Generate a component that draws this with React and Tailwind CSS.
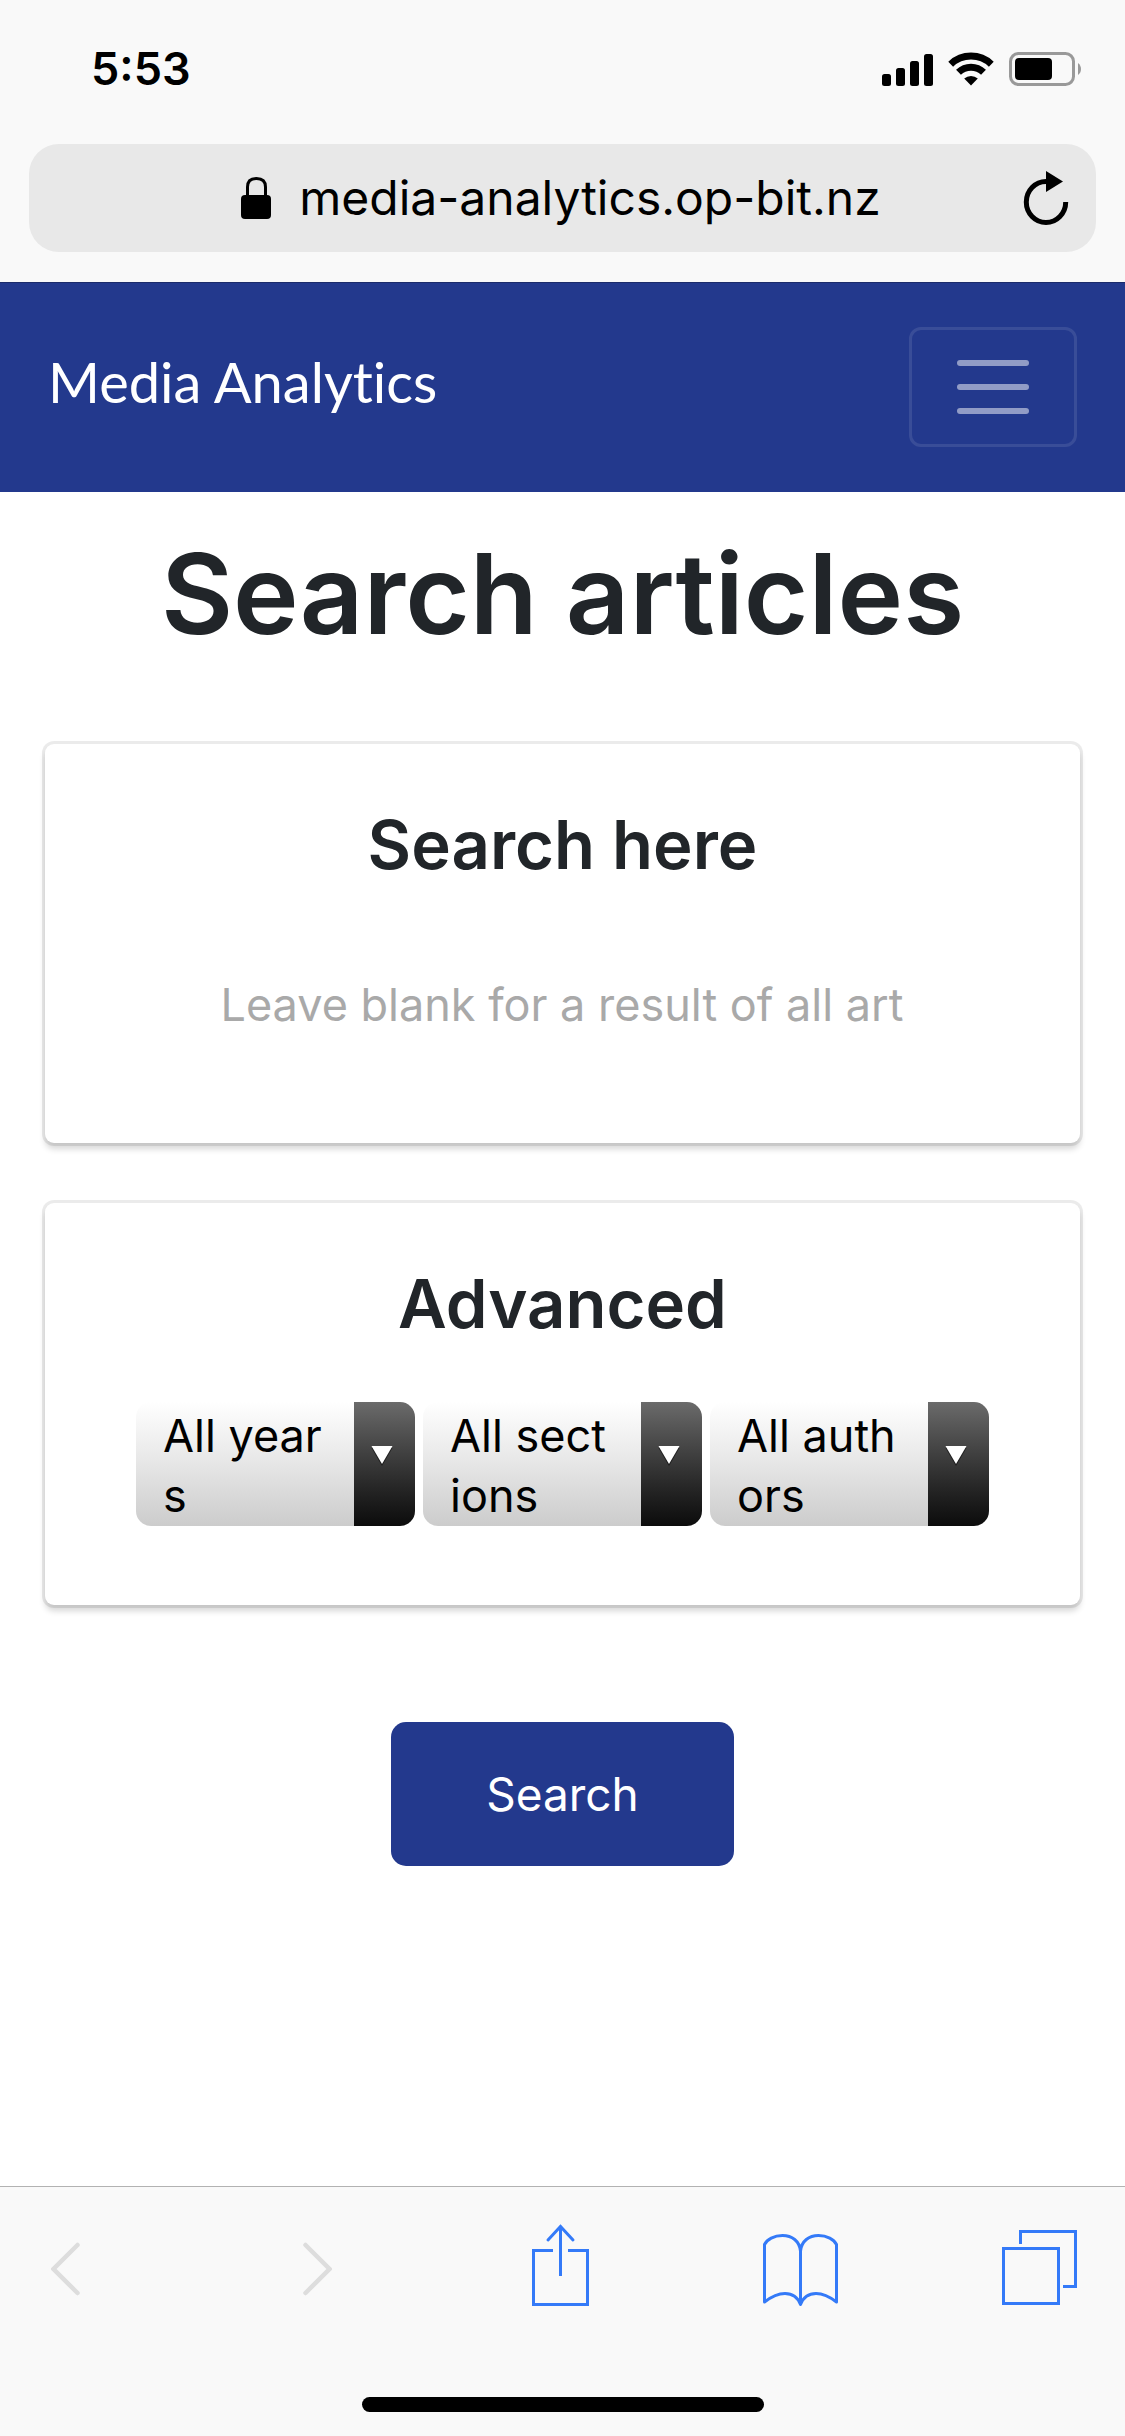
import React from "react";

function StatusBar() {
  return (
    <div className="flex h-[144px] items-start justify-between pt-[42px] pr-[43px] pl-[91px]">
      <time className="text-[45px] leading-[54px] font-semibold">5:53</time>
      <div className="flex items-center gap-[15px] pt-[10px]">
        <svg width="51" height="33" viewBox="0 0 51 33" fill="black" role="img" aria-label="Signal strength">
          <rect x="0" y="21" width="9" height="12" rx="2.5" />
          <rect x="14" y="15" width="9" height="18" rx="2.5" />
          <rect x="28" y="8" width="9" height="25" rx="2.5" />
          <rect x="42" y="1" width="9" height="32" rx="2.5" />
        </svg>
        <svg width="46" height="34" viewBox="0 0 46 34" role="img" aria-label="Wi-Fi">
          <g fill="none" stroke="black" strokeWidth="7">
            <path d="M2.7 12.2 A29.5 29.5 0 0 1 43.3 12.2" />
            <path d="M10.5 20.3 A18 18 0 0 1 35.5 20.3" />
          </g>
          <path d="M23 33.5 L16.2 26.4 A10.5 10.5 0 0 1 29.8 26.4 Z" />
        </svg>
        <svg width="73" height="34" viewBox="0 0 73 34" role="img" aria-label="Battery">
          <rect x="1.5" y="1.5" width="63" height="31" rx="8" fill="none" stroke="#999999" strokeWidth="3" />
          <rect x="6" y="6" width="37" height="22" rx="4" />
          <path d="M69 11 A7.5 7.5 0 0 1 69 23 Z" fill="#999999" />
        </svg>
      </div>
    </div>
  );
}

function AddressBar() {
  return (
    <div className="px-[29px] pb-[30px]">
      <div className="flex h-[108px] items-center rounded-[30px] bg-[#e8e8e8] pr-[27px] pl-[70px]">
        <div className="flex flex-1 items-center justify-center gap-[28px]">
          <svg width="30" height="42" viewBox="0 0 30 42" role="img" aria-label="Secure">
            <path d="M6.5 19 V10 Q6.5 1.5 15.5 1.5 Q24.5 1.5 24.5 10 V19" fill="none" stroke="black" strokeWidth="3" />
            <rect x="0" y="18" width="30" height="24" rx="4" />
          </svg>
          <span className="text-[48px] leading-[60px]">media-analytics.op-bit.nz</span>
        </div>
        <button type="button" aria-label="Reload">
          <svg width="46" height="54" viewBox="0 0 46 54">
            <path d="M23 10.5 A19.7 20.5 0 1 0 42.7 31" fill="none" stroke="black" strokeWidth="5" />
            <path d="M23 0 L40 10.5 L23 21 Z" />
          </svg>
        </button>
      </div>
    </div>
  );
}

function Navbar() {
  return (
    <nav className="flex h-[210px] items-center justify-between border-t border-[#1b2b6b] bg-[#23398d] px-12 pb-[2px]">
      <a href="#" className="pb-[10px] font-[Lato,sans-serif] text-[56px] leading-[90px] text-white [font-variant-ligatures:none]">
        Media Analytics
      </a>
      <button
        type="button"
        aria-label="Toggle navigation"
        className="flex h-[120px] w-[168px] flex-col items-center justify-center gap-[18px] rounded-xl border-3 border-white/10"
      >
        <span className="h-[6px] w-[72px] rounded-full bg-white/50" />
        <span className="h-[6px] w-[72px] rounded-full bg-white/50" />
        <span className="h-[6px] w-[72px] rounded-full bg-white/50" />
      </button>
    </nav>
  );
}

function Card({ title, children }) {
  return (
    <section className="flex flex-col items-center rounded-[9px] bg-white pt-[58px] shadow-[0_6px_6px_rgba(0,0,0,0.16),0_0_0_3px_rgba(0,0,0,0.08)]">
      <h2 className="text-[67px] leading-[86px] font-semibold text-[#212529]">{title}</h2>
      {children}
    </section>
  );
}

function Dropdown({ name, label }) {
  return (
    <div className="relative flex h-[124px] w-[279px] overflow-hidden rounded-[15px]">
      <span
        aria-hidden="true"
        className="flex-1 bg-linear-to-b from-white via-[#e6e6e6] to-[#cccccc] pt-[4px] pr-[28px] pl-[27px] text-[45px] leading-[60px] break-all text-black"
      >
        {label}
      </span>
      <span
        aria-hidden="true"
        className="flex w-[61px] justify-center bg-linear-to-b from-[#6b6b6b] to-[#0c0c0c] pt-[44px] pr-[5px]"
      >
        <svg width="22" height="20" viewBox="0 0 22 20">
          <path d="M0.5 2 H21.5 L11 20 Z" fill="black" fillOpacity="0.5" />
          <path d="M0.5 0 H21.5 L11 18 Z" fill="white" />
        </svg>
      </span>
      <select name={name} aria-label={label} className="absolute inset-0 opacity-0">
        <option>{label}</option>
      </select>
    </div>
  );
}

function Toolbar() {
  return (
    <footer className="border-t border-[#b2b2b2] bg-[#f9f9f9]">
      <div className="flex h-[163px] items-center justify-between pr-12 pl-[51px]">
        <button type="button" disabled aria-label="Back" className="flex w-[60px] justify-start">
          <svg width="29" height="54" viewBox="0 0 29 54" fill="none" stroke="#dddddd" strokeWidth="4.5" strokeLinecap="round">
            <path d="M26.5 3 L2.5 27 L26.5 51" />
          </svg>
        </button>
        <button type="button" disabled aria-label="Forward" className="flex w-[84px] justify-center">
          <svg width="29" height="54" viewBox="0 0 29 54" fill="none" stroke="#dddddd" strokeWidth="4.5" strokeLinecap="round">
            <path d="M2.5 3 L26.5 27 L2.5 51" />
          </svg>
        </button>
        <button type="button" aria-label="Share" className="flex w-[75px] justify-center pr-[2px] pb-[8px]">
          <svg width="57" height="82" viewBox="0 0 57 82" fill="none" stroke="#347af8" strokeWidth="3">
            <path d="M21 26.5 H1.5 V80.5 H55.5 V26.5 H36" />
            <path d="M28.5 52 V3" />
            <path d="M16 16 L28.5 2.5 L41 16" strokeLinecap="round" />
          </svg>
        </button>
        <button type="button" aria-label="Bookmarks" className="flex w-[75px] justify-center pt-[2px]">
          <svg width="75" height="74" viewBox="0 0 75 74" fill="none" stroke="#347af8" strokeWidth="3" strokeLinejoin="round">
            <path d="M37.5 18 C36.5 8 29 2.5 19.5 2.5 C11 2.5 4 6.5 1.5 11.5 V69 C8 64 14 60.5 22 60.5 C31 60.5 35 65 37.5 71.5 C40 65 44 60.5 53 60.5 C61 60.5 67 64 73.5 69 V11.5 C71 6.5 64 2.5 55.5 2.5 C46 2.5 38.5 8 37.5 18 V71" />
          </svg>
        </button>
        <button type="button" aria-label="Tabs" className="flex w-[75px] justify-center pb-[2px]">
          <svg width="75" height="75" viewBox="0 0 75 75" fill="none" stroke="#347af8" strokeWidth="3">
            <rect x="1.5" y="18.5" width="55" height="55" />
            <path d="M18.5 14 V1.5 H73.5 V56.5 H61" />
          </svg>
        </button>
      </div>
      <div className="flex h-[86px] justify-center pt-[47px]">
        <div className="h-[15px] w-[402px] rounded-full bg-black" />
      </div>
    </footer>
  );
}

export default function App() {
  return (
    <div className="flex min-h-screen flex-col bg-white font-[Inter,sans-serif] text-black">
      <header className="bg-[#f9f9f9]">
        <StatusBar />
        <AddressBar />
      </header>
      <Navbar />
      <main className="flex flex-1 flex-col px-[45px]">
        <h1 className="pt-[30px] pb-[78px] text-center text-[111px] leading-[144px] font-semibold text-[#212529]">
          Search articles
        </h1>
        <form className="flex flex-col" onSubmit={(event) => event.preventDefault()}>
          <div className="flex flex-col gap-[60px]">
            <Card title="Search here">
              <input
                type="text"
                name="query"
                aria-label="Search here"
                placeholder="Leave blank for a result of all articles"
                className="mt-[71px] mb-[94px] h-[90px] w-[684px] text-[45px] placeholder:text-[#a9a9a9]"
              />
            </Card>
            <Card title="Advanced">
              <div className="mt-[55px] mb-[79px] flex gap-2">
                <Dropdown name="year" label="All years" />
                <Dropdown name="section" label="All sections" />
                <Dropdown name="author" label="All authors" />
              </div>
            </Card>
          </div>
          <button
            type="submit"
            className="mt-[117px] h-[144px] w-[343px] self-center rounded-[15px] bg-[#23398d] text-[46px] text-white"
          >
            Search
          </button>
        </form>
      </main>
      <Toolbar />
    </div>
  );
}
